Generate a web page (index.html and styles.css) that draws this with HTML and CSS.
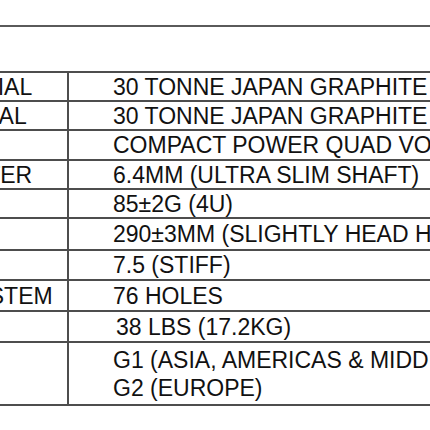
FILE: index.html
```html
<!DOCTYPE html>
<html lang="en">
<head>
<meta charset="utf-8">
<title>Specifications</title>
<link rel="stylesheet" href="styles.css">
</head>
<body>
<div class="sheet">
  <div class="rule"></div>
  <div class="specs">
    <div class="label">FRAME MATERIAL</div><div class="value">30 TONNE JAPAN GRAPHITE</div>
    <div class="label">SHAFT MATERIAL</div><div class="value">30 TONNE JAPAN GRAPHITE</div>
    <div class="label">TECHNOLOGY</div><div class="value">COMPACT POWER QUAD VOLUME</div>
    <div class="label">SHAFT DIAMETER</div><div class="value">6.4MM (ULTRA SLIM SHAFT)</div>
    <div class="label">WEIGHT</div><div class="value">85±2G (4U)</div>
    <div class="label">BALANCE</div><div class="value">290±3MM (SLIGHTLY HEAD HEAVY)</div>
    <div class="label">STIFFNESS</div><div class="value">7.5 (STIFF)</div>
    <div class="label">GROMMET SYSTEM</div><div class="value">76 HOLES</div>
    <div class="label">TENSION</div><div class="value value-nudge">38 LBS (17.2KG)</div>
    <div class="label">GRIP SIZE</div><div class="value value-multi">G1 (ASIA, AMERICAS &amp; MIDDLE EAST)<br>G2 (EUROPE)</div>
  </div>
</div>
</body>
</html>
```
FILE: styles.css
```css
html, body {
  margin: 0;
  padding: 0;
  background: #ffffff;
  overflow: hidden;
}

body {
  font-family: "Liberation Sans", Arial, sans-serif;
  color: #111111;
}

.sheet {
  margin-left: -175px;
  width: 900px;
}

.rule {
  margin-top: 25px;
  border-top: 2px solid #5a5a5a;
}

.specs {
  margin-top: 44px;
  display: grid;
  grid-template-columns: 244px 1fr;
  grid-template-rows: 29px 29px 30px 29px 29px 32px 30px 31px 31px 63px;
  border-top: 2px solid #4d4d4d;
}

.label,
.value {
  box-sizing: border-box;
  display: flex;
  align-items: center;
  border-bottom: 2px solid #4d4d4d;
  font-size: 23px;
  line-height: 26px;
  white-space: nowrap;
}

.label {
  padding-left: 7px;
  border-right: 2px solid #4d4d4d;
}

.value {
  padding-left: 44px;
}

.value-nudge {
  padding-left: 47px;
}

.value-multi {
  line-height: 28px;
}
```
